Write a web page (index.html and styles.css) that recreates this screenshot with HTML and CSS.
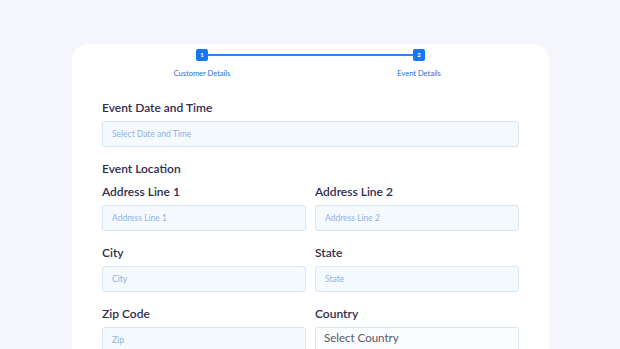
FILE: index.html
```html
<!DOCTYPE html>
<html>
<head>
<meta charset="utf-8">
<link rel="stylesheet" href="styles.css">
</head>
<body>
<div class="card">
  <div class="stepper">
    <div class="step">
      <div class="marker">1</div>
      <div class="step-label">Customer Details</div>
    </div>
    <div class="step-line"></div>
    <div class="step">
      <div class="marker">2</div>
      <div class="step-label">Event Details</div>
    </div>
  </div>

  <div class="field">
    <div class="label">Event Date and Time</div>
    <div class="input">Select Date and Time</div>
  </div>

  <div class="section-title">Event Location</div>

  <div class="grid">
    <div class="field">
      <div class="label">Address Line 1</div>
      <div class="input">Address Line 1</div>
    </div>
    <div class="field">
      <div class="label">Address Line 2</div>
      <div class="input">Address Line 2</div>
    </div>
    <div class="field">
      <div class="label">City</div>
      <div class="input">City</div>
    </div>
    <div class="field">
      <div class="label">State</div>
      <div class="input">State</div>
    </div>
    <div class="field">
      <div class="label">Zip Code</div>
      <div class="input">Zip</div>
    </div>
    <div class="field">
      <div class="label">Country</div>
      <div class="input select">Select Country</div>
    </div>
  </div>
</div>
</body>
</html>
```

FILE: styles.css
```css
html, body {
  margin: 0;
  padding: 0;
  height: 349px;
  overflow: hidden;
}
body {
  background: #f4f6fc;
  font-family: "Lato", "Liberation Sans", sans-serif;
}
.card {
  margin: 44px 0 0 72px;
  width: 477px;
  box-sizing: border-box;
  height: 305px;
  background: #ffffff;
  border-radius: 16px 16px 0 0;
  padding: 5px 30px 0 30px;
}
.stepper {
  display: flex;
  align-items: flex-start;
  margin: 0 94px;
}
.step {
  width: 12px;
  display: flex;
  flex-direction: column;
  align-items: center;
}
.marker {
  width: 12px;
  height: 12px;
  border-radius: 2px;
  background: #1677f2;
  color: #fff;
  font-size: 6px;
  line-height: 12px;
  text-align: center;
  font-weight: 700;
}
.step-line {
  flex: 1;
  height: 2px;
  background: #2a86f4;
  margin-top: 5px;
}
.step-label {
  margin-top: 8px;
  font-size: 7.5px;
  line-height: 10px;
  color: #1c6fd8;
  white-space: nowrap;
}
.stepper + .field {
  margin-top: 21px;
}
.label {
  font-size: 12px;
  line-height: 15px;
  font-weight: 600;
  color: #2f2c4e;
  margin-bottom: 6px;
}
.input {
  height: 26px;
  box-sizing: border-box;
  border: 1px solid #d8e5f4;
  border-radius: 3px;
  background: #f5faff;
  padding-left: 9px;
  font-size: 8.5px;
  line-height: 24px;
  color: #8fb1e6;
}
.input.select {
  background: #fafcfe;
  font-size: 11.5px;
  line-height: 20px;
  color: #5a5a66;
  padding-left: 8px;
}
.section-title {
  margin-top: 14px;
  font-size: 12px;
  line-height: 15px;
  font-weight: 600;
  color: #2f2c4e;
  margin-bottom: 8px;
}
.grid {
  display: grid;
  grid-template-columns: 1fr 1fr;
  column-gap: 9px;
  row-gap: 14px;
}
```
